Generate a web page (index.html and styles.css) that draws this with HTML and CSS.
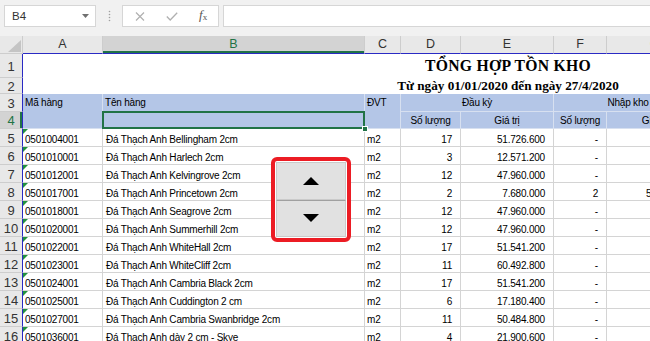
FILE: index.html
```html
<!DOCTYPE html>
<html lang="vi">
<head>
    <meta charset="UTF-8">
    <title>Tổng hợp tồn kho</title>
    <link rel="stylesheet" href="styles.css">
</head>
<body>
<div class="app">
    <!-- thanh công thức -->
    <div class="formula-bar">
        <div class="name-box">
            <span>B4</span>
            <svg width="7" height="4" viewBox="0 0 7 4"><polygon points="0,0 7,0 3.5,4" fill="#707070"/></svg>
        </div>
        <div class="grip">
            <svg width="3" height="12" viewBox="0 0 3 12">
                <circle cx="1.5" cy="1.5" r="0.8" fill="#a0a0a0"/>
                <circle cx="1.5" cy="4.5" r="0.8" fill="#a0a0a0"/>
                <circle cx="1.5" cy="7.5" r="0.8" fill="#a0a0a0"/>
                <circle cx="1.5" cy="10.5" r="0.8" fill="#a0a0a0"/>
            </svg>
        </div>
        <div class="fx-box">
            <svg width="10" height="9" viewBox="0 0 10 9"><path d="M1 0.5 L9 8.5 M9 0.5 L1 8.5" stroke="#b0b0b0" stroke-width="1.2" fill="none"/></svg>
            <svg width="12" height="9" viewBox="0 0 12 9"><path d="M0.8 4.5 L4.2 8 L11.2 0.8" stroke="#b0b0b0" stroke-width="1.3" fill="none"/></svg>
            <span class="fx"><i>f</i><sub>x</sub></span>
        </div>
        <div class="formula-input"></div>
    </div>

    <!-- bảng tính -->
    <div class="sheet">
        <div class="corner">
            <svg width="13" height="12" viewBox="0 0 13 12"><polygon points="13,0 13,12 0,12" fill="#c4c4c4"/></svg>
        </div>
        <div class="ch">A</div>
        <div class="ch sel">B</div>
        <div class="ch">C</div>
        <div class="ch">D</div>
        <div class="ch">E</div>
        <div class="ch">F</div>
        <div class="ch">G</div>
        <div class="ch">H</div>

        <div class="rh">1</div>
        <div class="title">TỔNG HỢP TỒN KHO</div>

        <div class="rh">2</div>
        <div class="subtitle">Từ ngày 01/01/2020 đến ngày 27/4/2020</div>

        <div class="rh">3</div>
        <div class="c hd tall">Mã hàng</div>
        <div class="c hd">Tên hàng</div>
        <div class="c hd tall">ĐVT</div>
        <div class="c hd wide">Đầu kỳ</div>
        <div class="c hd wide">Nhập kho</div>
        <div class="c hd"></div>

        <div class="rh sel">4</div>
        <div class="c hd active"></div>
        <div class="c hd mid">Số lượng</div>
        <div class="c hd mid">Giá trị</div>
        <div class="c hd mid">Số lượng</div>
        <div class="c hd mid">Giá trị</div>
        <div class="c hd"></div>

        <div class="rh">5</div>
        <div class="c code">0501004001</div>
        <div class="c name">Đá Thạch Anh Bellingham 2cm</div>
        <div class="c">m2</div>
        <div class="c num">17</div>
        <div class="c num">51.726.600</div>
        <div class="c num">-</div>
        <div class="c num"></div>
        <div class="c"></div>

        <div class="rh">6</div>
        <div class="c code">0501010001</div>
        <div class="c name">Đá Thạch Anh Harlech 2cm</div>
        <div class="c">m2</div>
        <div class="c num">3</div>
        <div class="c num">12.571.200</div>
        <div class="c num">-</div>
        <div class="c num"></div>
        <div class="c"></div>

        <div class="rh">7</div>
        <div class="c code">0501012001</div>
        <div class="c name">Đá Thạch Anh Kelvingrove 2cm</div>
        <div class="c">m2</div>
        <div class="c num">12</div>
        <div class="c num">47.960.000</div>
        <div class="c num">-</div>
        <div class="c num"></div>
        <div class="c"></div>

        <div class="rh">8</div>
        <div class="c code">0501017001</div>
        <div class="c name">Đá Thạch Anh Princetown 2cm</div>
        <div class="c">m2</div>
        <div class="c num">2</div>
        <div class="c num">7.680.000</div>
        <div class="c num">2</div>
        <div class="c num">52.360.000</div>
        <div class="c"></div>

        <div class="rh">9</div>
        <div class="c code">0501018001</div>
        <div class="c name">Đá Thạch Anh Seagrove 2cm</div>
        <div class="c">m2</div>
        <div class="c num">12</div>
        <div class="c num">47.960.000</div>
        <div class="c num">-</div>
        <div class="c num"></div>
        <div class="c"></div>

        <div class="rh">10</div>
        <div class="c code">0501020001</div>
        <div class="c name">Đá Thạch Anh Summerhill 2cm</div>
        <div class="c">m2</div>
        <div class="c num">12</div>
        <div class="c num">47.960.000</div>
        <div class="c num">-</div>
        <div class="c num"></div>
        <div class="c"></div>

        <div class="rh">11</div>
        <div class="c code">0501022001</div>
        <div class="c name">Đá Thạch Anh WhiteHall 2cm</div>
        <div class="c">m2</div>
        <div class="c num">17</div>
        <div class="c num">51.541.200</div>
        <div class="c num">-</div>
        <div class="c num"></div>
        <div class="c"></div>

        <div class="rh">12</div>
        <div class="c code">0501023001</div>
        <div class="c name">Đá Thạch Anh WhiteCliff 2cm</div>
        <div class="c">m2</div>
        <div class="c num">11</div>
        <div class="c num">60.492.800</div>
        <div class="c num">-</div>
        <div class="c num"></div>
        <div class="c"></div>

        <div class="rh">13</div>
        <div class="c code">0501024001</div>
        <div class="c name">Đá Thạch Anh Cambria Black 2cm</div>
        <div class="c">m2</div>
        <div class="c num">17</div>
        <div class="c num">51.541.200</div>
        <div class="c num">-</div>
        <div class="c num"></div>
        <div class="c"></div>

        <div class="rh">14</div>
        <div class="c code">0501025001</div>
        <div class="c name">Đá Thạch Anh Cuddington 2 cm</div>
        <div class="c">m2</div>
        <div class="c num">6</div>
        <div class="c num">17.180.400</div>
        <div class="c num">-</div>
        <div class="c num"></div>
        <div class="c"></div>

        <div class="rh">15</div>
        <div class="c code">0501027001</div>
        <div class="c name">Đá Thạch Anh Cambria Swanbridge 2cm</div>
        <div class="c">m2</div>
        <div class="c num">11</div>
        <div class="c num">50.484.800</div>
        <div class="c num">-</div>
        <div class="c num"></div>
        <div class="c"></div>

        <div class="rh">16</div>
        <div class="c code">0501036001</div>
        <div class="c name">Đá Thạch Anh dày 2 cm - Skye</div>
        <div class="c">m2</div>
        <div class="c num">4</div>
        <div class="c num">21.900.600</div>
        <div class="c num">-</div>
        <div class="c num"></div>
        <div class="c"></div>
    </div>

    <!-- nút tăng giảm (spin button) -->
    <div class="spinner">
        <div class="spin-btn">
            <svg width="16" height="8" viewBox="0 0 16 8"><polygon points="8,0 16,8 0,8" fill="#000"/></svg>
        </div>
        <div class="spin-btn">
            <svg width="16" height="8" viewBox="0 0 16 8"><polygon points="0,0 16,0 8,8" fill="#000"/></svg>
        </div>
    </div>
</div>
</body>
</html>
```

FILE: styles.css
```css
/* trang */
body {
    margin: 0;
    background-color: white;
    font-family: "Liberation Sans", Arial, sans-serif;
    overflow: hidden;
}

.app {
    position: relative;
    width: 650px;
    height: 341px;
    overflow: hidden;
}

/* thanh công thức */
.formula-bar {
    display: flex;
    align-items: flex-start;
    height: 36px;
    padding: 5px 0 0 4px;
    box-sizing: border-box;
    background-color: #f1f1f1;
}

.name-box {
    width: 92px;
    height: 22px;
    box-sizing: border-box;
    background-color: white;
    border: 1px solid #d6d6d6;
    display: flex;
    align-items: center;
    justify-content: space-between;
    padding: 0 6px 0 7px;
    font-size: 11.5px;
    color: #333;
}

.grip {
    width: 26px;
    height: 22px;
    display: flex;
    align-items: center;
    justify-content: center;
}

.fx-box {
    width: 97px;
    height: 22px;
    box-sizing: border-box;
    background-color: white;
    border: 1px solid #d6d6d6;
    display: flex;
    align-items: center;
    gap: 21px;
    padding-left: 12px;
}

.fx {
    font-family: "Liberation Serif", serif;
    font-size: 13px;
    color: #555;
    line-height: 12px;
}

.fx sub {
    font-size: 9px;
    vertical-align: -1px;
}

.formula-input {
    flex: 1;
    height: 22px;
    margin-left: 4px;
    box-sizing: border-box;
    background-color: white;
    border: 1px solid #d6d6d6;
    border-right: none;
}

/* lưới bảng tính */
.sheet {
    display: grid;
    grid-template-columns: 23px 80px 262px 36px 60px 93px 53px 96px 290px;
    grid-template-rows: 18px 24px 16px 18px 17px repeat(12, 18px);
    width: max-content;
}

.corner {
    background-color: #e8e8e8;
    border-right: 1px solid #cdcdcd;
    border-bottom: 1px solid #cdcdcd;
    display: flex;
    align-items: flex-end;
    justify-content: flex-end;
    padding: 0 1px 1px 0;
}

/* tiêu đề cột */
.ch {
    background-color: #e8e8e8;
    border-right: 1px solid #cdcdcd;
    border-bottom: 1px solid #2a2ac4;
    font-size: 12.5px;
    color: #333;
    text-align: center;
    line-height: 17px;
}

.ch.sel {
    background-color: #d3d3d3;
    color: #217346;
    box-shadow: inset 0 -2px 0 #217346;
}

/* tiêu đề dòng */
.rh {
    background-color: #e8e8e8;
    border-right: 1px solid #2a2ac4;
    border-bottom: 1px solid #cdcdcd;
    font-size: 13px;
    color: #333;
    display: flex;
    align-items: center;
    justify-content: center;
    padding-top: 1px;
}

.rh.sel {
    background-color: #d3d3d3;
    color: #217346;
    box-shadow: inset -2px 0 0 #217346;
}

.title {
    grid-column: span 8;
    text-align: center;
    font-family: "Liberation Serif", "Times New Roman", serif;
    font-weight: bold;
    font-size: 15.7px;
    letter-spacing: 0.3px;
    line-height: 24px;
}

.subtitle {
    grid-column: span 8;
    text-align: center;
    font-family: "Liberation Serif", "Times New Roman", serif;
    font-weight: bold;
    font-size: 13.2px;
    line-height: 15px;
}

/* ô dữ liệu */
.c {
    box-sizing: border-box;
    border-right: 1px solid #d4d4d4;
    border-bottom: 1px solid #d4d4d4;
    font-size: 10px;
    letter-spacing: -0.2px;
    line-height: 13px;
    padding: 4px 2px 0;
    white-space: nowrap;
    overflow: hidden;
    color: black;
}

.name {
    padding-left: 3px;
}

.num {
    text-align: right;
    padding-right: 8px;
}

.code {
    position: relative;
}

/* tam giác xanh: số lưu dạng text */
.code::before {
    content: "";
    position: absolute;
    top: 0;
    left: 0;
    border-top: 5px solid #22913f;
    border-right: 5px solid transparent;
}

/* dòng tiêu đề bảng */
.hd {
    background-color: #b4c6e7;
    border-right-color: #d7e0f0;
    border-bottom-color: #d7e0f0;
    padding-top: 2px;
}

.hd.tall {
    grid-row: span 2;
}

.hd.wide {
    grid-column: span 2;
    text-align: center;
}

.hd.mid {
    text-align: center;
}

/* ô đang chọn B4 */
.hd.active {
    position: relative;
    overflow: visible;
}

.hd.active::after {
    content: "";
    position: absolute;
    left: -1px;
    top: -1px;
    right: -1px;
    bottom: -1px;
    border: 2px solid #217346;
}

.hd.active::before {
    content: "";
    position: absolute;
    right: -4px;
    bottom: -4px;
    width: 4px;
    height: 4px;
    background-color: #217346;
    border: 1px solid white;
    z-index: 1;
}

/* spin button khung đỏ */
.spinner {
    position: absolute;
    left: 271px;
    top: 157px;
    width: 80px;
    height: 85px;
    box-sizing: border-box;
    border: 4px solid #ec1c24;
    border-radius: 6px;
    background-color: white;
    padding: 1px;
    display: flex;
    flex-direction: column;
}

.spin-btn {
    flex: 1;
    background-color: #e1e1e1;
    border: 1px solid #cacaca;
    display: flex;
    align-items: center;
    justify-content: center;
}

.spin-btn + .spin-btn {
    border-top: 1px solid #a0a0a0;
}
```
